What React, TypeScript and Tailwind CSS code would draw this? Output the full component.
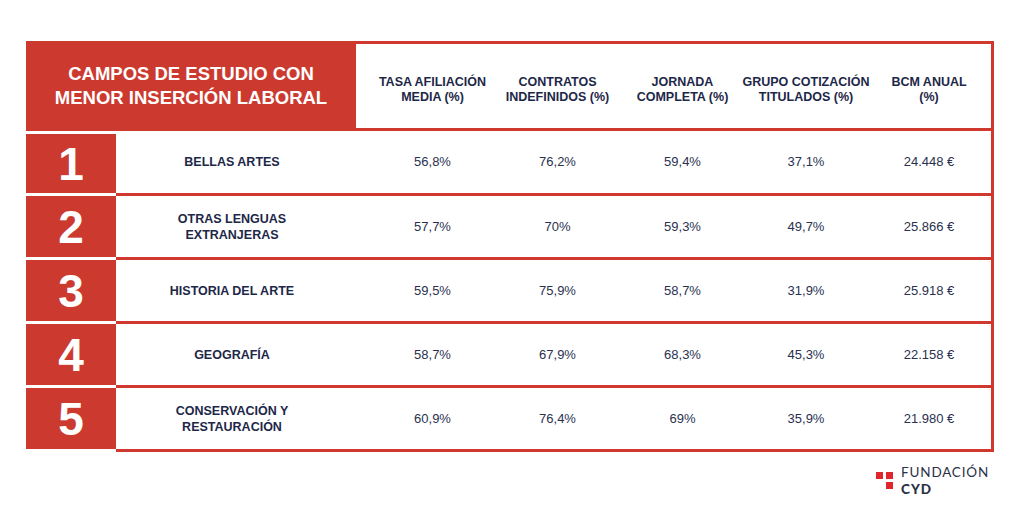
const RED = "bg-[#cc3a2f]";

const columnsHeader = [
  { label: ["TASA AFILIACIÓN", "MEDIA (%)"], w: "w-[125px]" },
  { label: ["CONTRATOS", "INDEFINIDOS (%)"], w: "w-[125px]" },
  { label: ["JORNADA", "COMPLETA (%)"], w: "w-[125px]" },
  { label: ["GRUPO COTIZACIÓN", "TITULADOS (%)"], w: "w-[122px]" },
  { label: ["BCM ANUAL", "(%)"], w: "w-[124px]" },
];

const rows = [
  { n: "1", name: ["BELLAS ARTES"], values: ["56,8%", "76,2%", "59,4%", "37,1%", "24.448 €"] },
  { n: "2", name: ["OTRAS LENGUAS", "EXTRANJERAS"], values: ["57,7%", "70%", "59,3%", "49,7%", "25.866 €"] },
  { n: "3", name: ["HISTORIA DEL ARTE"], values: ["59,5%", "75,9%", "58,7%", "31,9%", "25.918 €"] },
  { n: "4", name: ["GEOGRAFÍA"], values: ["58,7%", "67,9%", "68,3%", "45,3%", "22.158 €"] },
  { n: "5", name: ["CONSERVACIÓN Y", "RESTAURACIÓN"], values: ["60,9%", "76,4%", "69%", "35,9%", "21.980 €"] },
];

function Logo() {
  return (
    <div className="flex items-center gap-[8px]">
      <div className="grid grid-cols-[7px_7px] grid-rows-[7px_7px] gap-[3px]">
        <div className="bg-[#e0262a]" />
        <div className="bg-[#e0262a]" />
        <div />
        <div className="bg-[#e0262a]" />
      </div>
      <div className="flex flex-col text-[#2b3047] font-['Lato',sans-serif]">
        <span className="text-[13.5px] leading-[16.5px] font-normal tracking-[0.8px]">FUNDACIÓN</span>
        <span className="text-[13.5px] leading-[16.5px] font-black tracking-[0.9px]">CYD</span>
      </div>
    </div>
  );
}

export default function App() {
  return (
    <div className="w-[1024px] h-[522px] bg-white font-['Liberation_Sans',Arial,sans-serif] overflow-hidden">
      <div className="ml-[26px] pt-[41px] w-[968px]">
        {/* header */}
        <div className="flex h-[90px]">
          <div className={`w-[330px] ${RED} flex items-center justify-center text-center text-white font-bold text-[18.5px] leading-[24px]`}>
            <div>
              CAMPOS DE ESTUDIO CON
              <br />
              MENOR INSERCIÓN LABORAL
            </div>
          </div>
          <div className="flex-1 flex pl-[14px] border-t-[3px] border-r-[3px] border-b-[3px] border-[#d0372e]">
            {columnsHeader.map((c) => (
              <div
                key={c.label[0]}
                className={`${c.w} flex items-center justify-center pt-[8px] text-center font-bold text-[12.5px] leading-[15px] text-[#1d2748] whitespace-nowrap`}
              >
                <div>
                  {c.label[0]}
                  <br />
                  {c.label[1]}
                </div>
              </div>
            ))}
          </div>
        </div>

        {/* rows */}
        {rows.map((r, i) => (
          <div key={r.n} className={`flex ${i === 0 ? "h-[65px]" : "h-[64px]"}`}>
            <div className={`w-[90px] pb-[3px] ${i === 0 ? "pt-[3px]" : ""}`}>
              <div className={`h-full ${RED} flex items-center justify-center text-white font-bold text-[46px] leading-none`}>
                {r.n}
              </div>
            </div>
            <div className="flex-1 flex border-r-[3px] border-b-[3px] border-[#d0372e]">
              <div className="w-[254px] pr-[22px] flex items-center justify-center text-center font-bold text-[12.5px] leading-[16px] text-[#1d2748]">
                <div>
                  {r.name.map((l) => (
                    <div key={l}>{l}</div>
                  ))}
                </div>
              </div>
              {r.values.map((v, j) => (
                <div
                  key={j}
                  className={`${columnsHeader[j].w} flex items-center justify-center text-[13px] text-[#2a3150]`}
                >
                  {v}
                </div>
              ))}
            </div>
          </div>
        ))}

        {/* footer logo */}
        <div className="flex justify-end pr-[5px] mt-[12px]">
          <Logo />
        </div>
      </div>
    </div>
  );
}
